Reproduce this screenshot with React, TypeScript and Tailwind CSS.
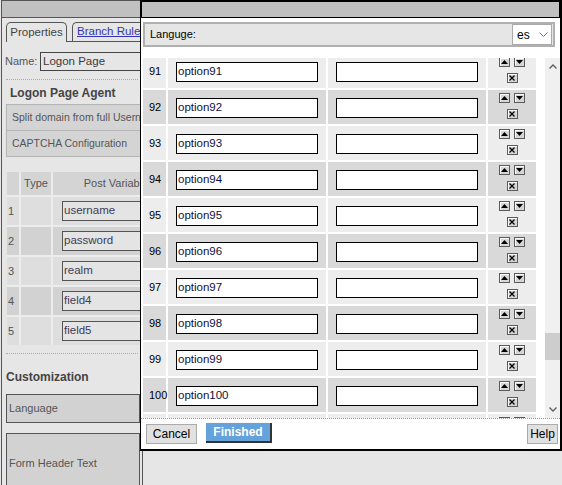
import React from "react";

const rows = [91, 92, 93, 94, 95, 96, 97, 98, 99, 100, 101];
const postVars = ["username", "password", "realm", "field4", "field5"];

function TinyButton({ kind }: { kind: "up" | "down" | "del" }) {
    return (
        <div className="w-[11px] h-[10px] border border-[#5a5a5a] bg-[#d6d6d6] shadow-[inset_1px_1px_0_#ffffff] flex items-center justify-center">
            {kind === "up" && (
                <svg width="7" height="4" viewBox="0 0 7 4"><polygon points="0,4 7,4 3.5,0" fill="#000" /></svg>
            )}
            {kind === "down" && (
                <svg width="7" height="4" viewBox="0 0 7 4"><polygon points="0,0 7,0 3.5,4" fill="#000" /></svg>
            )}
            {kind === "del" && (
                <svg width="6" height="6" viewBox="0 0 6 6">
                    <path d="M0.5 0.5 L5.5 5.5 M5.5 0.5 L0.5 5.5" stroke="#000" strokeWidth="1.3" />
                </svg>
            )}
        </div>
    );
}

function OptionRow({ n, peek }: { n: number; peek?: boolean }) {
    // odd rows light, even rows darker; "peek" row is the one cut off by the scroll edge
    const bg = n % 2 === 1 ? "bg-[#ededed]" : "bg-[#d9d9d9]";
    return (
        <div className="flex gap-[2px] h-[34px] shrink-0">
            <div className={`${bg} w-[23px] flex items-center pl-[6px] pt-px`}>{peek ? "" : n}</div>
            <div className={`${bg} w-[158px] pl-[8px] pt-[8px]`}>
                <div className="w-[142px] h-[20px] bg-white border border-black flex items-center pl-[1px] text-[#10103a] text-[11.5px]">
                    {peek ? "" : `option${n}`}
                </div>
            </div>
            <div className={`${bg} w-[158px] pl-[8px] pt-[8px]`}>
                <div className="w-[142px] h-[20px] bg-white border border-black" />
            </div>
            <div className={`${bg} w-[48px] flex flex-col items-center pt-[3px]`}>
                <div className="flex gap-[4px]">
                    <TinyButton kind="up" />
                    <TinyButton kind="down" />
                </div>
                <div className="mt-[6px]">
                    <TinyButton kind="del" />
                </div>
            </div>
        </div>
    );
}

export default function App() {
    return (
        <div className="relative w-[562px] h-[485px] overflow-hidden bg-[#e6e6e6] font-['Liberation_Sans',Arial,sans-serif] text-[11px]">
            {/* Left properties panel */}
            <div className="ml-px w-[142px] h-full border-x border-[#555] flex flex-col overflow-hidden text-[#555]">
                <div className="h-[18px] shrink-0 bg-[#c0c0c0] border-y border-[#555]" />

                {/* Tabs */}
                <div className="flex h-[20px] mt-[4px] shrink-0">
                    <div className="ml-[4px] w-[61px] shrink-0 border-l border-t border-r border-[#555] rounded-t-[5px] flex items-center justify-center text-[#444] text-[11.5px]">
                        Properties
                    </div>
                    <div className="flex-1 border-b border-[#555] flex items-end">
                        <div className="ml-[5px] mt-[1px] w-[120px] h-[19px] border-l border-t border-[#555] rounded-tl-[5px] pl-[4px] flex items-center text-[#3434b4] underline text-[11.5px] whitespace-nowrap">
                            Branch Rules
                        </div>
                    </div>
                </div>

                {/* Name */}
                <div className="flex items-center mt-[10px] h-[19px] shrink-0">
                    <span className="pl-[3px] w-[38px] shrink-0">Name:</span>
                    <div className="w-[160px] shrink-0 h-[19px] border border-[#444] pl-[2px] flex items-center text-[#3a3a3a] text-[11.5px]">
                        Logon Page
                    </div>
                </div>

                <div className="mt-[8px] mx-[4px] border-t border-dotted border-[#aaa]" />

                <div className="mt-[6px] pl-[8px] font-bold text-[12px] text-[#444] leading-[14px]">Logon Page Agent</div>

                <div className="mt-[4px] ml-[4px] w-[200px] shrink-0">
                    <div className="h-[27px] bg-[#d4d4d4] border border-[#b4b4b4] flex items-center pl-[5px] text-[10.5px] whitespace-nowrap">
                        Split domain from full Username
                    </div>
                    <div className="h-[26px] bg-[#d4d4d4] border border-t-0 border-[#b4b4b4] flex items-center pl-[5px] text-[10.5px]">
                        CAPTCHA Configuration
                    </div>
                </div>

                {/* Post variables table */}
                <div className="mt-[15px] ml-[5px] w-[172px] shrink-0 grid grid-cols-[12px_30px_126px] gap-[2px] bg-[#ececec]">
                    <div className="h-[23px] bg-[#d4d4d4]" />
                    <div className="h-[23px] bg-[#d4d4d4] flex items-center justify-center">Type</div>
                    <div className="h-[23px] bg-[#d4d4d4] flex items-center justify-center whitespace-nowrap">Post Variable</div>
                    {postVars.map((v, i) => {
                        const bg = i % 2 === 0 ? "bg-[#dedede]" : "bg-[#d2d2d2]";
                        return (
                            <React.Fragment key={v}>
                                <div className={`${bg} h-[28px] flex items-center pl-[1px]`}>{i + 1}</div>
                                <div className={`${bg} h-[28px]`} />
                                <div className={`${bg} h-[28px] flex items-center pl-[9px]`}>
                                    <div className="w-[115px] h-[20px] border border-[#555] bg-[#e4e4e4] flex items-center pl-px text-[#3c3c58] text-[11.5px]">
                                        {v}
                                    </div>
                                </div>
                            </React.Fragment>
                        );
                    })}
                </div>

                <div className="mt-[8px] mx-[4px] border-t border-dotted border-[#aaa]" />

                <div className="mt-[16px] pl-[4px] font-bold text-[12px] text-[#444] leading-[14px]">Customization</div>

                <div className="mt-[10px] ml-[4px] w-[134px] h-[29px] shrink-0 border border-[#555] bg-[#d2d2d2] flex items-center pl-[2px]">
                    Language
                </div>
                <div className="mt-[10px] ml-[4px] w-[134px] h-[60px] shrink-0 border border-[#555] bg-[#d2d2d2] flex items-center pl-[2px]">
                    Form Header Text
                </div>
            </div>

            {/* Options dialog */}
            <div className="absolute left-[140px] top-0 w-[422px] h-[451px] bg-white border-l border-t border-r-2 border-b-2 border-black flex flex-col text-black">
                <div className="h-[17px] shrink-0 bg-[#c0c0c0] border border-black" />

                <div className="mt-[4px] ml-[2px] mr-[5px] h-[25px] shrink-0 border-2 border-[#b0b0b0] bg-[#e6e6e6] flex items-center justify-between pl-[5px] pr-[1px]">
                    <span>Languge:</span>
                    <div className="w-[40px] h-[21px] bg-white border border-[#aaa] flex items-center justify-between pl-[4px] pr-[3px] text-[12px]">
                        <span>es</span>
                        <svg width="9" height="5" viewBox="0 0 9 5">
                            <polyline points="0.5,0.5 4.5,4.5 8.5,0.5" fill="none" stroke="#777" strokeWidth="1" />
                        </svg>
                    </div>
                </div>

                <div className="mt-[11px] h-[360px] shrink-0 flex">
                    <div className="flex-1 overflow-hidden">
                        <div className="-mt-[4px] pl-[2px] flex flex-col gap-[2px]">
                            {rows.map((n) => (
                                <OptionRow key={n} n={n} peek={n === 101} />
                            ))}
                        </div>
                    </div>
                    {/* scrollbar */}
                    <div className="w-[15px] bg-[#f0f0f0] flex flex-col">
                        <div className="h-[17px] flex items-center justify-center">
                            <svg width="8" height="5" viewBox="0 0 8 5">
                                <polyline points="0.5,4.5 4,1 7.5,4.5" fill="none" stroke="#606060" strokeWidth="1.4" />
                            </svg>
                        </div>
                        <div className="flex-1">
                            <div className="mt-[258px] h-[27px] bg-[#cdcdcd]" />
                        </div>
                        <div className="h-[17px] flex items-center justify-center">
                            <svg width="8" height="5" viewBox="0 0 8 5">
                                <polyline points="0.5,0.5 4,4 7.5,0.5" fill="none" stroke="#606060" strokeWidth="1.4" />
                            </svg>
                        </div>
                    </div>
                </div>

                {/* footer */}
                <div className="flex-1 border-t border-dotted border-[#999] flex items-start pt-[5px]">
                    <div className="ml-[5px] w-[51px] h-[20px] border border-[#aaa] bg-[#e1e1e1] flex items-center justify-center text-[12px]">
                        Cancel
                    </div>
                    <div className="ml-[9px] -mt-px w-[66px] h-[20px] bg-[#64a2dc] border-r-2 border-b-2 border-[#333] flex items-center justify-center text-white font-bold text-[12px]">
                        Finished
                    </div>
                    <div className="ml-auto mr-[2px] w-[31px] h-[20px] border border-[#aaa] bg-[#e1e1e1] flex items-center justify-center text-[12px]">
                        Help
                    </div>
                </div>
            </div>
        </div>
    );
}
